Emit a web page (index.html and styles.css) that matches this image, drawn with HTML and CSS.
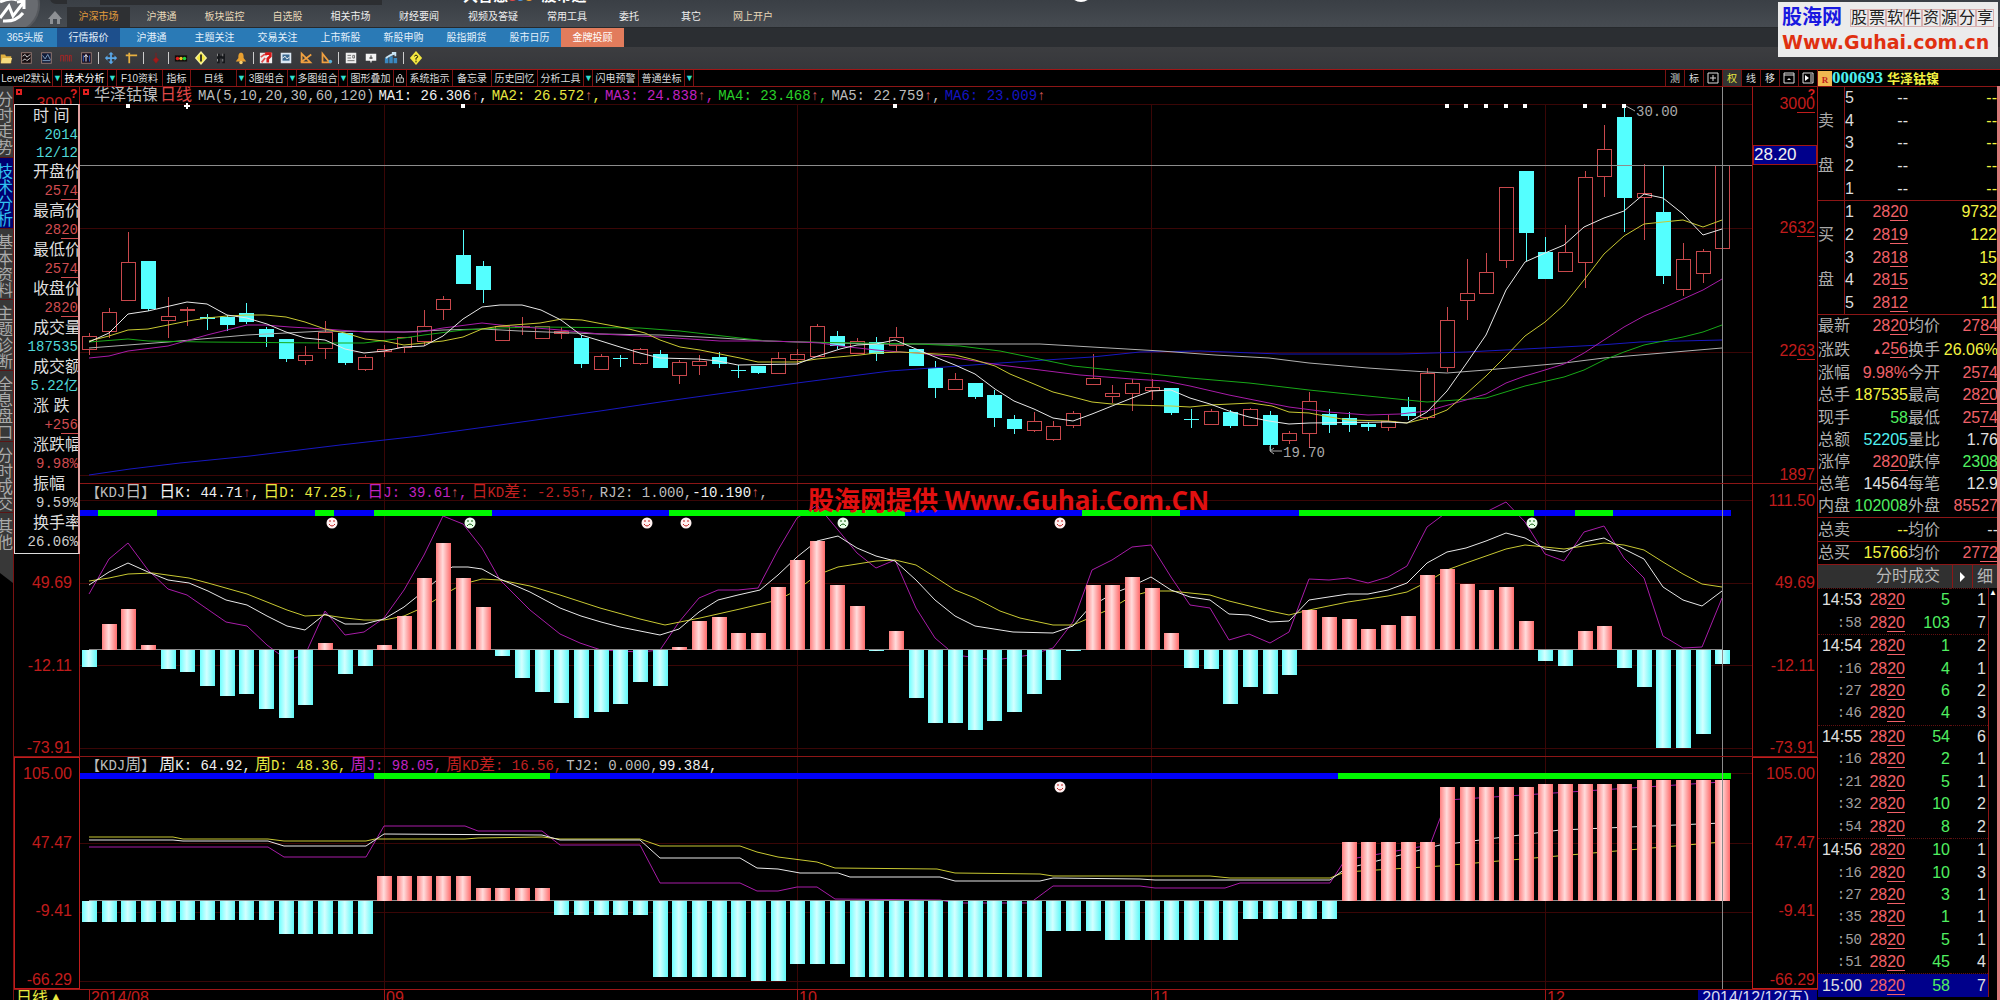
FILE: index.html
```html
<!DOCTYPE html>
<html lang="zh-CN">
<head>
  <meta charset="UTF-8" />
  <meta name="viewport" content="width=device-width, initial-scale=1.0"/>
  <title>华泽钴镍 000693 - 技术分析</title>
  <link rel="stylesheet" href="styles.css">
</head>
<body>
  <!-- Top navigation -->
  <header class="top">
    <svg class="logo" viewBox="0 0 67 28" aria-hidden="true">
      <circle cx="12" cy="6" r="28" fill="#55585d"/>
      <circle cx="12" cy="6" r="26" fill="#686b70"/>
      <path d="M0 19 L9 7 L13 17 L23 4 M17 3 L24 2 L24 10" fill="none" stroke="#fff" stroke-width="3"/>
      <path d="M0 3 Q10 -2 17 1 M3 22 Q16 23 23 14" fill="none" stroke="#fff" stroke-width="3"/>
      <path d="M48 20 L55 12 L62 20 L60 20 L60 25 L57 25 L57 20 L53 20 L53 25 L50 25 L50 20 Z" fill="#8d9094"/>
      <path d="M50 0 Q51 5 57 5 L67 5 L67 0 Z" fill="#2c2e31"/>
    </svg>
    <nav class="main-nav">
      <a href="#" class="active">沪深市场</a>
      <a href="#">沪港通</a>
      <a href="#">板块监控</a>
      <a href="#">自选股</a>
      <a href="#" class="plain">相关市场</a>
      <a href="#" class="wide plain">财经要闻</a>
      <a href="#" class="wide plain">视频及答疑</a>
      <a href="#" class="wide plain">常用工具</a>
      <a href="#" class="narrow plain">委托</a>
      <a href="#" class="wide plain">其它</a>
      <a href="#" class="narrow">网上开户</a>
    </nav>
    <div class="top-strip"></div>
    <div class="brand">大智慧<span class="r">3</span><span class="b">6</span><span class="o">5</span>&nbsp; 股市通</div>
    <div class="knob"></div>
  </header>

  <nav class="sub-nav">
    <a href="#" class="first">365头版</a>
    <a href="#" class="active">行情报价</a>
    <a href="#">沪港通</a>
    <a href="#">主题关注</a>
    <a href="#">交易关注</a>
    <a href="#">上市新股</a>
    <a href="#">新股申购</a>
    <a href="#">股指期货</a>
    <a href="#">股市日历</a>
    <a href="#" class="gold">金牌投顾</a>
  </nav>

  <!-- Icon toolbar -->
  <div class="icons">
    <button aria-label="打开"><svg viewBox="0 0 16 16"><path d="M2 4h5l1 2h6v8H2z" fill="#e0b040"/><path d="M4 8h11l-2 6H2z" fill="#f6dc80"/></svg></button>
    <button aria-label="分时"><svg viewBox="0 0 16 16"><rect x="3" y="2" width="11" height="12" fill="#150d10" stroke="#a08078"/><path d="M4 6l3-2 2 3 4-3M4 11l3-2 2 2 4-3" stroke="#ddd" fill="none"/></svg></button>
    <button aria-label="日线"><svg viewBox="0 0 16 16"><rect x="3" y="2" width="11" height="12" fill="#121c38" stroke="#a08078"/><path d="M4 5l3 4 3-5 3 6M4 11h9" stroke="#8ac" fill="none"/></svg></button>
    <button aria-label="成交"><svg viewBox="0 0 16 16"><path d="M2 12V5h3v7M7 12V5h3v7M12 12V5h2v7" stroke="#b02424" fill="none"/></svg></button>
    <button aria-label="指标"><svg viewBox="0 0 16 16"><rect x="3" y="2" width="11" height="12" fill="#181024" stroke="#a08078"/><path d="M8 12V5M6 7l2-3 2 3" stroke="#fff" fill="none"/><path d="M5 5v7M12 5v7" stroke="#36c"/></svg></button>
    <i></i>
    <button aria-label="移动"><svg viewBox="0 0 16 16"><path d="M8 1l3 3H9v3h3V5l3 3-3 3V9H9v3h2l-3 3-3-3h2V9H4v2L1 8l3-3v2h3V4H5z" fill="#5aa8e8"/></svg></button>
    <button aria-label="画线"><svg viewBox="0 0 16 16"><path d="M2 5h13M6 2v12" stroke="#e8b040" stroke-width="2"/></svg></button>
    <i></i>
    <button aria-label="标记"><svg viewBox="0 0 16 16"><path d="M8 2v5M8 7l-3 3 3 4 3-4z" stroke="#8c1a1a" fill="#a01c1c"/></svg></button>
    <i></i>
    <button aria-label="信号灯"><svg viewBox="0 0 16 16"><rect x="1" y="5" width="14" height="7" fill="#120c08"/><circle cx="4" cy="8.5" r="2" fill="#e02020"/><circle cx="8" cy="8.5" r="2" fill="#f0c020"/><circle cx="12" cy="8.5" r="2" fill="#20d040"/></svg></button>
    <button aria-label="提示"><svg viewBox="0 0 16 16"><path d="M8 0l7 8-7 8-7-8z" fill="#f6f0a0"/><path d="M8 2l5 6-5 6-5-6z" fill="#f4e840"/><path d="M8 4v8" stroke="#222" stroke-width="2"/></svg></button>
    <button aria-label="查找"><svg viewBox="0 0 16 16"><path d="M5 3v11M11 3v11M5 7h6" stroke="#15171a" stroke-width="3"/><path d="M4 3v3M10 3v3M4 9v3M10 9v3" stroke="#999"/></svg></button>
    <button aria-label="预警"><svg viewBox="0 0 16 16"><path d="M8 2c3 0 3 3 3 6l3 4H2l3-4c0-3 0-6 3-6z" fill="#e8a030"/><circle cx="8" cy="13" r="2" fill="#f8d070"/></svg></button>
    <i></i>
    <button aria-label="地雷"><svg viewBox="0 0 16 16"><rect x="1" y="2" width="14" height="12" fill="#eee"/><path d="M2 7l4-3h3M3 13l4-5" stroke="#e05050" stroke-width="2" fill="none"/><path d="M7 3h6v3l-3 3v4" stroke="#d81818" stroke-width="3" fill="none"/></svg></button>
    <button aria-label="窗口"><svg viewBox="0 0 16 16"><rect x="2" y="2" width="12" height="12" fill="#dce8f4"/><rect x="4" y="4" width="8" height="7" fill="#3a6890"/><path d="M4 8l3-2 2 3 3-2" stroke="#fff" fill="none"/></svg></button>
    <button aria-label="画图"><svg viewBox="0 0 16 16"><path d="M3 3v10h10zM2 13L14 4" stroke="#f0a040" stroke-width="2" fill="none"/></svg></button>
    <button aria-label="三角尺"><svg viewBox="0 0 16 16"><path d="M4 3v10h8z" stroke="#f0a040" stroke-width="2" fill="none"/><circle cx="13" cy="12" r="2" fill="#5ab0d8"/></svg></button>
    <i></i>
    <button aria-label="资讯"><svg viewBox="0 0 16 16"><rect x="2" y="2" width="12" height="12" fill="#eee"/><path d="M4 5h4M4 8h4M4 11h8M10 5h2v3h-2z" stroke="#666" fill="none"/></svg></button>
    <button aria-label="消息"><svg viewBox="0 0 16 16"><path d="M2 3h12v8H9l-1 3-1-3H2z" fill="#f4f4f4"/><path d="M8 5v4M6 8h4" stroke="#222"/></svg></button>
    <button aria-label="统计"><svg viewBox="0 0 16 16"><path d="M1 8h4v6H1zM6 6h4v8H6zM11 8h4v6h-4z" fill="#3a88c0"/><path d="M2 8l5-3 5-2M9 2h4v4" stroke="#c8e4f4" stroke-width="2" fill="none"/></svg></button>
    <i></i>
    <button aria-label="帮助"><svg viewBox="0 0 16 16"><path d="M8 0l7 8-7 8-7-8z" fill="#f4e840"/><path d="M6 6q2-3 4 0q0 2-2 2v2M8 11v2" stroke="#000" fill="none"/></svg></button>
  </div>

  <!-- Chart toolbar -->
  <div class="tools">
    <button class="level">Level2默认</button><button class="arrow" aria-label="选择模板">▼</button>
    <button class="on">技术分析</button><button class="arrow" aria-label="选择分析">▼</button>
    <button>F10资料</button>
    <button class="short">指标</button>
    <button>日线</button><button class="arrow" aria-label="选择周期">▼</button>
    <button class="mid">3图组合</button><button class="arrow" aria-label="选择组合">▼</button>
    <button class="mid">多图组合</button><button class="arrow" aria-label="选择多图">▼</button>
    <button>图形叠加</button>
    <button class="lock" aria-label="锁定"><svg viewBox="0 0 12 14"><path d="M4 7V4q2-3 4 0v3" fill="none" stroke="#ddd"/><path d="M2 7h8v5H2zM6 8v3" fill="none" stroke="#ddd"/></svg></button>
    <button>系统指示</button>
    <button class="note">备忘录</button>
    <button>历史回忆</button>
    <button>分析工具</button><button class="arrow" aria-label="选择工具">▼</button>
    <button>闪电预警</button>
    <button>普通坐标</button><button class="arrow" aria-label="选择坐标">▼</button>
    <div class="tools-right">
      <button>测</button><button>标</button>
      <button aria-label="分屏"><svg viewBox="0 0 12 12"><path d="M1 1h10v10H1zM3 6h6M6 3v6" fill="none" stroke="#ddd"/></svg></button>
      <button class="sel">权</button><button>线</button><button>移</button>
      <button aria-label="最大化"><svg viewBox="0 0 12 12"><path d="M1 1h10v10H1zM1 3h10" fill="none" stroke="#ddd"/><path d="M4 8l2-2 2 2z" fill="#ddd"/></svg></button>
      <button aria-label="展开"><svg viewBox="0 0 12 12"><path d="M1 1h10v10H1zM9 2v8" fill="none" stroke="#ddd"/><path d="M3 3l4 3-4 3z" fill="#fff"/></svg></button>
    </div>
    <div class="stock"><span class="badge">R</span><span class="code">000693</span><span class="name">华泽钴镍</span></div>
  </div>

  <main>
    <nav class="side">
      <a href="#"><span>分时走势</span></a>
      <a href="#" class="on"><span>技术分析</span></a>
      <a href="#"><span>基本资料</span></a>
      <a href="#"><span>主题诊断</span></a>
      <a href="#"><span>全息盘口</span></a>
      <a href="#"><span>分时成交</span></a>
      <a href="#" class="last"><span>其他</span></a>
    </nav>

    <div class="charts">
      <!-- K line -->
      <section class="pane">
        <div class="axis left"><span>3000</span></div>
        <div class="plot">
          <svg id="kline" viewBox="80 87 1672 396" preserveAspectRatio="none"></svg>
          <div class="legend first">
            <span class="cn grey">华泽钴镍<em>日线</em></span>
            <span class="grey">MA(5,10,20,30,60,120)</span>
            <span class="white">MA1: 26.306<u>↑</u>,</span>
            <span class="yellow">MA2: 26.572<u>↑</u>,</span>
            <span class="magenta">MA3: 24.838<u>↑</u>,</span>
            <span class="green">MA4: 23.468<u>↑</u>,</span>
            <span class="grey">MA5: 22.759<u>↑</u>,</span>
            <span class="blue">MA6: 23.009<u>↑</u></span>
          </div>
        </div>
        <div class="axis right">
          <span>30<s>00</s></span><span>26<s>32</s></span><span>22<s>63</s></span><span>18<s>97</s></span>
          <b class="q">?</b>
          <div class="price-tag">28.20</div>
        </div>
        <i class="sq one"></i><i class="sq two"></i><b class="q left-q">?</b>
      </section>

      <!-- KDJ day -->
      <section class="pane">
        <div class="axis left"><span>&nbsp;</span><span>49.69</span><span>-12.11</span><span>-73.91</span></div>
        <div class="plot">
          <svg id="kdjDay" viewBox="80 484 1672 272" preserveAspectRatio="none"></svg>
          <div class="legend">
            <span class="grey">【KDJ<span class="cn">日</span>】</span>
            <span class="white"><span class="cn">日</span>K: 44.71<u>↑</u>,</span>
            <span class="yellow"><span class="cn">日</span>D: 47.25<u class="down">↓</u>,</span>
            <span class="magenta"><span class="cn">日</span>J: 39.61<u>↑</u>,</span>
            <span class="red"><span class="cn">日</span>KD<span class="cn">差</span>: -2.55<u>↑</u>,</span>
            <span class="grey">RJ2: 1.000,<span class="white">-10.190</span><u>↑</u>,</span>
          </div>
        </div>
        <div class="axis right"><span>111.50</span><span>49.69</span><span>-12.11</span><span>-73.91</span></div>
        <div class="watermark">股海网提供 Www.Guhai.Com.CN</div>
      </section>

      <!-- KDJ week -->
      <section class="pane bright">
        <div class="axis left"><span>105.00</span><span>47.47</span><span>-9.41</span><span>-66.29</span></div>
        <div class="plot">
          <svg id="kdjWeek" viewBox="80 757 1672 232" preserveAspectRatio="none"></svg>
          <div class="legend">
            <span class="grey">【KDJ<span class="cn">周</span>】</span>
            <span class="white"><span class="cn">周</span>K: 64.92,</span>
            <span class="yellow"><span class="cn">周</span>D: 48.36,</span>
            <span class="magenta"><span class="cn">周</span>J: 98.05,</span>
            <span class="red"><span class="cn">周</span>KD<span class="cn">差</span>: 16.56,</span>
            <span class="grey">TJ2: 0.000,<span class="white">99.384,</span></span>
          </div>
        </div>
        <div class="axis right"><span>105.00</span><span>47.47</span><span>-9.41</span><span>-66.29</span></div>
      </section>

      <div class="dates">
        <span class="period">日线▲</span>
        <span class="m aug">2014/08</span>
        <span class="m sep">09</span>
        <span class="m oct">10</span>
        <span class="m nov">11</span>
        <span class="m dec">12</span>
        <span class="cur">2014/12/12(五)</span>
      </div>

      <!-- Values under the cursor -->
      <dl class="info">
        <dt>时 间</dt><dd class="c tight">2014</dd><dd class="c tight">12/12</dd>
        <dt>开盘价</dt><dd>25<s>74</s></dd>
        <dt>最高价</dt><dd>28<s>20</s></dd>
        <dt>最低价</dt><dd>25<s>74</s></dd>
        <dt>收盘价</dt><dd>28<s>20</s></dd>
        <dt>成交量</dt><dd class="c">187535</dd>
        <dt>成交额</dt><dd class="c">5.22亿</dd>
        <dt>涨 跌</dt><dd>+2<s>56</s></dd>
        <dt>涨跌幅</dt><dd>9.98%</dd>
        <dt>振幅</dt><dd class="w">9.59%</dd>
        <dt>换手率</dt><dd class="w">26.06%</dd>
      </dl>
    </div>

    <aside class="quote">
      <div class="book">
        <table>
          <tr><td class="side-name"></td><td class="n">5</td><td class="p w">--</td><td class="y">--</td></tr>
          <tr><td class="side-name">卖</td><td class="n">4</td><td class="p w">--</td><td class="y">--</td></tr>
          <tr><td class="side-name"></td><td class="n">3</td><td class="p w">--</td><td class="y">--</td></tr>
          <tr><td class="side-name">盘</td><td class="n">2</td><td class="p w">--</td><td class="y">--</td></tr>
          <tr><td class="side-name"></td><td class="n">1</td><td class="p w">--</td><td class="y">--</td></tr>
          <tr class="line"><td class="side-name"></td><td class="n">1</td><td class="p">28<s>20</s></td><td class="y">9732</td></tr>
          <tr><td class="side-name">买</td><td class="n">2</td><td class="p">28<s>19</s></td><td class="y">122</td></tr>
          <tr><td class="side-name"></td><td class="n">3</td><td class="p">28<s>18</s></td><td class="y">15</td></tr>
          <tr><td class="side-name">盘</td><td class="n">4</td><td class="p">28<s>15</s></td><td class="y">32</td></tr>
          <tr><td class="side-name"></td><td class="n">5</td><td class="p">28<s>12</s></td><td class="y">11</td></tr>
        </table>
      </div>
      <div class="stats">
        <table>
          <tr class="line"><th>最新</th><td class="p">28<s>20</s></td><th>均价</th><td class="p">27<s>84</s></td></tr>
          <tr><th>涨跌</th><td class="p"><small>▲</small>2<s>56</s></td><th>换手</th><td class="y">26.06%</td></tr>
          <tr><th>涨幅</th><td class="p">9.98%</td><th>今开</th><td class="p">25<s>74</s></td></tr>
          <tr><th>总手</th><td class="y">187535</td><th>最高</th><td class="p">28<s>20</s></td></tr>
          <tr><th>现手</th><td class="g">58</td><th>最低</th><td class="p">25<s>74</s></td></tr>
          <tr><th>总额</th><td class="c">52205</td><th>量比</th><td class="w">1.76</td></tr>
          <tr><th>涨停</th><td class="p">28<s>20</s></td><th>跌停</th><td class="g">23<s>08</s></td></tr>
          <tr><th>总笔</th><td class="w">14564</td><th>每笔</th><td class="w">12.9</td></tr>
          <tr><th>内盘</th><td class="g">102008</td><th>外盘</th><td class="p">85527</td></tr>
          <tr class="line"><th>总卖</th><td class="y">--</td><th>均价</th><td class="w">--</td></tr>
          <tr class="line"><th>总买</th><td class="y">15766</td><th>均价</th><td class="p">27<s>72</s></td></tr>
        </table>
      </div>
      <div class="ticks-head"><span>分时成交</span><button class="play" aria-label="切换"></button><button>细</button></div>
      <div class="ticks">
        <table id="ticks"></table>
        <div class="scroll">▲</div>
      </div>
    </aside>
    <div class="edge"></div>
  </main>

  <div class="site">
    <div class="site-row"><b>股海网</b><span><i>股</i><i>票</i><i>软</i><i>件</i><i>资</i><i>源</i><i>分</i><i>享</i></span></div>
    <div class="site-url">Www.Guhai.com.cn</div>
  </div>

  <script src="chart.js"></script>
</body>
</html>
```

FILE: styles.css
```css
* {
  box-sizing: border-box;
}
body {
  margin: 0;
  height: 100vh;
  overflow: hidden;
  display: flex;
  flex-direction: column;
  background: #000;
  color: #ddd;
  font-family: "Liberation Sans", "Noto Sans CJK SC", sans-serif;
  font-size: 16px;
}
a {
  color: inherit;
  text-decoration: none;
}
button {
  margin: 0;
  padding: 0;
  border: 0;
  background: none;
  color: inherit;
  font: inherit;
  white-space: nowrap;
}
table {
  border-collapse: collapse;
}
s {
  text-decoration: none;
  border-bottom: 1px solid;
}

/* top navigation */
.top {
  position: relative;
  flex: none;
  height: 28px;
  display: flex;
  align-items: flex-end;
  overflow: hidden;
  background: linear-gradient(#3a3f45, #464b51);
  border-bottom: 1px solid #26292c;
}
.logo {
  width: 67px;
  height: 28px;
}
.main-nav {
  display: flex;
  font-size: 10px;
  line-height: 20px;
  text-align: center;
}
.main-nav a {
  width: 63px;
  color: #e8d8b8;
}
.main-nav .plain {
  color: #eee;
}
.main-nav .wide {
  width: 74px;
}
.main-nav .narrow {
  width: 50px;
}
.main-nav .active {
  background: #2e3033;
  color: #e09a3c;
}
.top-strip {
  position: absolute;
  left: 100px;
  top: 0;
  width: 282px;
  height: 5px;
  background: #2c2e31;
}
.brand {
  position: absolute;
  left: 463px;
  top: -14px;
  font-size: 15px;
  font-weight: bold;
  line-height: 20px;
  color: #fff;
}
.brand .r { color: #e04848; }
.brand .b { color: #4a90d8; }
.brand .o { color: #e8a030; }
.knob {
  position: absolute;
  left: 1069px;
  top: -22px;
  width: 24px;
  height: 24px;
  border-radius: 50%;
  background: #fff;
}

.sub-nav {
  flex: none;
  display: flex;
  height: 19px;
  background: #2b2e32;
  color: #e4f0fa;
  font-size: 10px;
  line-height: 19px;
  text-align: center;
}
.sub-nav a {
  width: 63px;
  background: #2a7ab6;
}
.sub-nav .first {
  width: 57px;
  padding-right: 7px;
}
.sub-nav .active {
  background: #1d4f8c;
}
.sub-nav .gold {
  background: #e27c5c;
  color: #fff;
}

/* toolbars */
.icons {
  flex: none;
  display: flex;
  align-items: center;
  height: 22px;
  margin-left: -4px;
  background: linear-gradient(#3c3d40, #36373b);
}
.icons button {
  width: 20px;
  height: 16px;
}
.icons svg {
  display: block;
  width: 14px;
  height: 14px;
  margin: 1px auto;
}
.icons i {
  width: 1px;
  height: 12px;
  margin: 0 2px;
  background: #ccc;
}
.tools {
  flex: none;
  display: flex;
  height: 17px;
  border-top: 1px solid #a01616;
  font-size: 10px;
  line-height: 15px;
}
.tools button {
  width: 46px;
  border-right: 1px solid #7a1212;
}
.tools .level { width: 53px; }
.tools .short { width: 28px; }
.tools .mid { width: 42px; }
.tools .note { width: 39px; }
.tools .on { color: #fff; }
.tools .arrow {
  width: 9px;
  font-size: 9px;
  color: #2fe0d0;
}
.tools .lock {
  width: 13px;
}
.tools svg {
  display: block;
  width: 12px;
  height: 12px;
  margin: auto;
}
.tools-right {
  display: flex;
  margin-left: auto;
  border-left: 1px solid #7a1212;
}
.tools-right button {
  width: 19px;
}
.tools-right .sel {
  background: #333;
  color: #e8e840;
}
.stock {
  width: 182px;
  display: flex;
  align-items: center;
  font-weight: bold;
  white-space: nowrap;
}
.stock .badge {
  width: 14px;
  height: 15px;
  background: #f0b850;
  color: #c02020;
  font: bold 9px/18px "Liberation Serif", serif;
  text-align: center;
}
.stock .code {
  font: bold 17px/16px "Liberation Serif", serif;
  color: #4ef0f0;
}
.stock .name {
  margin-left: 4px;
  font-size: 13px;
  color: #f0f040;
}

/* body of the window */
main {
  flex: 1;
  min-height: 0;
  display: grid;
  grid-template-columns: 14px minmax(0, 1fr) 179px 3px;
  grid-template-rows: minmax(0, 1fr);
}
.side {
  overflow: hidden;
  color: #aaa;
  line-height: 16px;
  border-right: 1px solid #7a1212;
}
.side a {
  display: flex;
  justify-content: flex-end;
  height: 71px;
  padding: 6px 0 0;
  background: #383838;
}
.side a + a {
  border-top: 1px solid #5a1414;
}
.side .last {
  clip-path: polygon(0 0, 100% 0, 100% 100%, 0 calc(100% - 10px));
}
.side span {
  flex: none;
  width: 16px;
  word-break: break-all;
}
.side .on {
  background: #000070;
  color: #30c0f0;
}
.charts {
  position: relative;
  display: grid;
  grid-template-rows: minmax(0, 397fr) minmax(0, 273fr) minmax(0, 233fr) 11px;
}
.pane {
  position: relative;
  display: grid;
  grid-template-columns: 66px minmax(0, 1fr) 66px;
  grid-template-rows: minmax(0, 1fr);
  border-top: 1px solid #8c1616;
}
.axis {
  position: relative;
  display: flex;
  flex-direction: column;
  justify-content: space-between;
  padding-top: 9px;
  color: #c01c1c;
  line-height: 16px;
  text-align: right;
}
.axis.left {
  padding-right: 7px;
  border-right: 1px solid #a01616;
}
.axis.right {
  padding-right: 2px;
  border-left: 1px solid #a01616;
  border-right: 1px solid #a01616;
}
.bright .axis {
  border: 1px solid #c01c1c;
  padding-top: 8px;
}
.plot {
  display: grid;
  grid-template-rows: minmax(0, 1fr);
}
.plot > * {
  grid-area: 1 / 1;
}
.plot svg {
  display: block;
  width: 100%;
  height: 100%;
}
.legend {
  align-self: start;
  display: flex;
  gap: 4px;
  padding-left: 6px;
  font-family: "Liberation Mono", "Noto Sans CJK SC", monospace;
  font-size: 14px;
  line-height: 18px;
  white-space: nowrap;
  z-index: 1;
}
.legend.first {
  padding-left: 14px;
}
.legend .cn {
  font-size: 16px;
}
.legend em {
  margin: 0 2px;
  font-style: normal;
  color: #e04848;
}
.legend u {
  text-decoration: none;
  color: #d05858;
}
.legend .down {
  color: #30c030;
}
.white { color: #f0f0f0; }
.grey { color: #bdbdbd; }
.yellow { color: #e8e840; }
.magenta { color: #c022c0; }
.green { color: #28d028; }
.blue { color: #1414c0; }
.red { color: #c02020; }
.price-tag {
  position: absolute;
  left: 0;
  right: 0;
  top: 58px;
  border: 1px solid #a01616;
  background: #00008b;
  color: #f0f0f0;
  font-size: 17px;
  line-height: 18px;
  text-align: left;
}
.q {
  position: absolute;
  right: 2px;
  top: 0;
  font-size: 12px;
  line-height: 14px;
  color: #e02020;
}
.left-q {
  right: auto;
  left: 56px;
}
.sq {
  position: absolute;
  top: 2px;
  width: 6px;
  height: 6px;
  border: 2px solid #e02020;
}
.sq.one { left: 2px; }
.sq.two { left: 69px; }
.watermark {
  position: absolute;
  left: 794px;
  top: 1px;
  color: #e01010;
  font-family: "Open Sans", "Noto Sans CJK SC", sans-serif;
  font-size: 26px;
  font-weight: bold;
  line-height: 30px;
  white-space: nowrap;
  z-index: 2;
}

/* month labels */
.dates {
  position: relative;
  overflow: hidden;
  color: #c01c1c;
  line-height: 16px;
  border-top: 1px solid #a01616;
}
.dates span {
  position: absolute;
  top: 0;
  white-space: nowrap;
}
.dates .m {
  padding-left: 1px;
  border-left: 1px solid #a01616;
}
.dates .period {
  left: 2px;
  color: #e8e840;
}
.aug { left: 75px; }
.sep { left: 370px; }
.oct { left: 783px; }
.nov { left: 1137px; }
.dec { left: 1531px; }
.dates .cur {
  right: 1px;
  padding: 0 8px 0 4px;
  background: #00008b;
  color: #d8d8f0;
}

.info {
  position: absolute;
  left: 0;
  top: 18px;
  width: 66px;
  margin: 0;
  padding: 1px 0;
  overflow: hidden;
  background: #000;
  border: 1px solid #ddd;
  border-right: 2px solid #e0a0a0;
  z-index: 2;
}
.info dt {
  margin: 0 0 0 18px;
  color: #ddd;
  line-height: 20px;
  white-space: nowrap;
}
.info dd {
  margin: 0;
  color: #d04c50;
  font-family: "Liberation Mono", "Noto Sans CJK SC", monospace;
  font-size: 14px;
  line-height: 19px;
  text-align: right;
}
.info .tight { line-height: 18px; }
.info .c { color: #50d8d8; }
.info .w { color: #ccc; }

/* quote panel */
.quote {
  display: flex;
  flex-direction: column;
  padding-bottom: 3px;
  line-height: 18px;
}
.quote table {
  width: 100%;
  height: 100%;
  table-layout: fixed;
}
.quote td,
.quote th {
  padding: 0;
  font-weight: normal;
  text-align: right;
  white-space: nowrap;
}
.quote .line {
  border-top: 1px solid #8c1616;
}
.book {
  flex: 10 1 0;
  min-height: 0;
  border-top: 1px solid #8c1616;
}
.stats {
  flex: 11 1 0;
  min-height: 0;
}
.book .side-name {
  width: 26px;
  border-right: 1px solid #8c1616;
  color: #aaa;
  text-align: left;
}
.book .n {
  width: 10px;
}
.book .p {
  width: 54px;
}
.stats th {
  width: 34px;
  color: #b0b0b0;
  text-align: left;
}
.stats td {
  width: 56px;
}
.stats small {
  font-size: 9px;
}
.quote .p { color: #f06068; }
.quote .y { color: #f4f440; }
.quote .g { color: #50f060; }
.quote .c { color: #50f0f0; }
.quote .w { color: #e0e0e0; }
.ticks-head {
  flex: 1 1 0;
  min-height: 0;
  display: flex;
  border-top: 1px solid #8c1616;
  background: #303030;
  color: #b8b8b8;
  line-height: 21px;
}
.ticks-head span {
  flex: 1;
  padding-right: 12px;
  text-align: right;
}
.ticks-head button {
  width: 25px;
  border-left: 1px solid #8c1616;
  line-height: 20px;
}
.ticks-head .play {
  width: 20px;
}
.play::before {
  content: "";
  display: block;
  width: 0;
  margin: auto;
  border: 5px solid transparent;
  border-left-color: #fff;
  border-right: 0;
}
.ticks {
  flex: 18 1 0;
  min-height: 0;
  display: flex;
}
.ticks table {
  flex: 1;
}
.ticks td:nth-child(1) { width: 44px; color: #e0e0e0; }
.ticks td:nth-child(2) { width: 43px; }
.ticks td:nth-child(3) { width: 45px; }
.ticks td:nth-child(4) { padding-right: 2px; color: #e0e0e0; }
.ticks .sec td:first-child {
  color: #a0a0a0;
  font-family: "Liberation Mono", monospace;
  font-size: 14px;
}
.ticks .minute {
  border-top: 1px dotted #601010;
}
.ticks .now {
  background: #00008b;
}
.scroll {
  width: 9px;
  border-left: 1px solid #8c1616;
  color: #fff;
  font-size: 8px;
  line-height: 10px;
}
.edge {
  background: #d87878;
}

/* site card over the top right corner */
.site {
  position: absolute;
  right: 2px;
  top: 2px;
  width: 220px;
  padding: 3px 4px;
  background: #ebebeb;
  z-index: 3;
}
.site-row {
  display: flex;
  justify-content: space-between;
  align-items: center;
  line-height: 25px;
}
.site-row b {
  color: #1818e0;
  font-size: 20px;
}
.site-row span {
  display: flex;
}
.site-row i {
  width: 18px;
  height: 18px;
  border: 1px solid #d8b0b0;
  color: #222;
  font-size: 16px;
  font-style: normal;
  line-height: 16px;
  text-align: center;
}
.site-url {
  color: #e03010;
  font-family: "DejaVu Sans", sans-serif;
  font-size: 19px;
  font-weight: bold;
  line-height: 24px;
}

/* chart drawing */
.grid { stroke: #3a0606; }
.cross { stroke: #8c8c8c; }
.up { fill: none; stroke: #c8484c; }
.down-c { fill: #54ffff; stroke: #54ffff; }
.mark { fill: #a8a8a8; font: 14px "Liberation Mono", monospace; }
.crisp { shape-rendering: crispEdges; }
```

FILE: chart.js
```js
var STEP = 19.68;
var MONTHS = [384, 797, 1151, 1545];

// kind (r = rise, f = fall), body top, body bottom, high, low
var candles = [
  'r336,349,333,355', 'r312,331,308,338', 'r262,300,232,300', 'f261,309,261,311', 'r316,320,297,338', 'r309,310,307,326',
  'f317,319,314,330', 'f317,325,315,331', 'f313,322,303,324', 'f329,337,327,347', 'f339,359,339,362', 'r355,360,346,365',
  'r332,348,321,359', 'f333,363,333,365', 'r357,369,355,371', 'r349,351,345,357', 'r337,347,337,353', 'r326,341,310,346',
  'r299,309,296,320', 'f255,284,230,284', 'f266,290,261,303', 'r326,340,326,340', 'r326,327,317,335', 'r326,338,326,338',
  'r331,333,327,339', 'f338,364,335,368', 'r356,369,354,369', 'f358,359,355,367', 'r349,363,348,365', 'f354,368,350,368',
  'r362,375,360,384', 'r361,365,355,375', 'f357,364,352,368', 'f370,371,365,378', 'f366,373,366,374', 'r358,373,352,373',
  'r354,359,349,365', 'r326,356,324,356', 'f336,346,331,349', 'r341,353,338,353', 'f342,354,337,361', 'r337,345,327,352',
  'f349,366,349,366', 'f368,388,361,398', 'r379,389,373,389', 'f383,397,383,399', 'f395,418,390,427', 'f419,429,415,434',
  'r421,430,412,432', 'r426,439,421,441', 'r413,425,411,428', 'r378,384,354,384', 'r393,396,385,403', 'r383,393,379,411',
  'r387,390,379,400', 'f388,413,388,415', 'f419,420,409,428', 'r411,424,409,424', 'f412,426,410,428', 'r409,425,408,425',
  'f415,445,411,451', 'r433,440,431,444', 'r401,433,392,448', 'f414,425,409,433', 'f418,425,412,432', 'f424,427,422,431',
  'r421,427,415,431', 'f407,416,397,420', 'r373,417,368,420', 'r320,367,307,372', 'r293,300,259,320', 'r272,293,253,294',
  'r187,260,187,268', 'f171,233,171,261', 'f252,279,237,279', 'r252,271,225,271', 'r177,262,171,288', 'r149,176,125,197',
  'f117,198,104,232', 'r193,197,164,240', 'f212,276,165,284', 'r259,289,243,296', 'r251,273,249,283', 'r165,248,165,248'
];

var ma = {
  '#1818c0': '89,475 130,469 180,463 250,456 340,445 420,436 500,425 600,411 667,401 797,383 890,371 1000,363 1092,357 1140,352 1200,351 1280,354 1400,354 1466,352 1525,349 1600,345 1640,342 1722,340',
  '#b0b0b0': '89,348 128,345 168,342 247,335 325,331 404,332 443,330 482,329 520,331 600,334 660,335 720,338 767,341 800,342 876,344 1040,344 1092,347 1161,351 1215,355 1269,358 1309,363 1368,368 1427,372 1447,373 1486,370 1564,363 1604,358 1663,353 1722,348',
  '#18a818': '89,342 128,339 148,341 205,342 325,343 364,343 404,338 424,335 463,330 500,328 540,327 640,328 680,331 740,338 767,341 800,342 860,343 918,344 960,346 1000,351 1034,358 1073,366 1132,372 1190,378 1249,383 1309,390 1348,394 1407,400 1427,402 1486,398 1525,386 1564,377 1584,370 1604,360 1624,352 1644,345 1683,337 1703,332 1722,325',
  '#a81ca8': '89,358 109,356 128,351 168,346 207,335 247,325 265,325 290,327 325,329 365,332 420,332 443,328 482,323 500,325 560,330 600,334 660,337 720,341 767,341 800,342 820,343 840,346 876,350 900,352 918,353 950,357 975,361 1000,365 1040,370 1080,375 1132,379 1165,381 1190,386 1229,395 1269,403 1289,407 1328,412 1368,415 1400,414 1427,411 1466,400 1486,394 1506,383 1525,376 1545,370 1564,364 1584,353 1604,340 1624,327 1644,316 1663,308 1683,299 1703,290 1722,279',
  '#c8c832': '89,341 109,336 128,330 148,329 168,325 188,321 207,318 227,316 247,315 265,315 286,317 305,322 325,329 345,333 365,339 384,341 404,345 424,343 443,341 463,337 482,329 500,326 540,323 562,319 582,320 603,324 625,328 645,333 660,340 680,347 700,350 720,354 740,358 758,362 797,362 817,359 838,357 860,355 876,353 900,352 918,353 955,355 975,360 995,366 1010,374 1034,384 1053,392 1073,397 1092,402 1112,404 1132,405 1171,406 1190,407 1210,405 1251,403 1272,406 1289,412 1309,413 1330,417 1348,420 1388,421 1407,423 1427,418 1447,410 1466,394 1486,376 1506,356 1525,336 1545,322 1564,305 1584,280 1604,254 1624,236 1644,224 1663,222 1683,220 1703,227 1722,220',
  '#e8e8e8': '89,342 109,333 128,314 148,311 187,302 207,304 227,315 247,318 267,324 286,332 305,338 325,340 345,349 364,353 384,351 404,347 424,346 443,336 463,319 482,307 500,305 522,305 541,310 561,320 581,335 601,341 620,347 640,353 660,358 699,359 718,361 738,365 797,364 818,356 840,349 857,345 876,344 895,340 916,349 935,357 955,365 975,374 995,389 1014,401 1034,409 1053,418 1073,421 1092,414 1112,406 1132,398 1151,391 1171,390 1190,398 1210,404 1229,411 1249,417 1269,421 1289,424 1309,423 1388,422 1407,423 1427,412 1447,391 1466,364 1486,335 1506,290 1525,262 1545,253 1564,245 1584,227 1604,218 1624,211 1644,194 1663,198 1683,214 1703,235 1722,229'
};

var day = {
  zero: 650,
  grid: [500, 583, 665, 748],
  bars: [667, 624, 609, 645, 669, 672, 686, 696, 694, 709, 718, 705, 643, 674, 666, 645, 616, 578, 543, 578, 607, 656,
    678, 692, 703, 718, 712, 704, 682, 686, 647, 621, 617, 633, 633, 587, 560, 541, 585, 606, 650, 631, 698, 723, 723,
    730, 721, 712, 694, 680, 651, 585, 585, 577, 588, 633, 668, 669, 704, 687, 694, 675, 610, 617, 619, 629, 625, 616,
    575, 569, 584, 590, 587, 621, 661, 666, 631, 626, 668, 687, 748, 748, 734, 664],
  band: 510,
  green: [[98, 157], [315, 334], [374, 492], [669, 905], [1082, 1180], [1299, 1534], [1575, 1613]],
  faces: [[332, 523, 1], [470, 523, 0], [647, 523, 1], [686, 523, 1], [843, 523, 0], [1060, 523, 1], [1532, 523, 0]],
  lines: {
    '#a81ca8': '89,594 109,559 128,543 148,570 168,589 187,595 226,622 247,626 267,645 287,660 305,655 325,611 345,635 364,632 384,618 404,590 424,555 443,516 463,524 482,548 500,580 530,610 560,634 580,643 601,650 640,652 660,650 679,622 699,598 718,590 738,590 758,588 778,550 797,518 817,505 838,530 857,553 876,568 895,560 916,608 935,638 955,655 995,660 1030,655 1053,648 1073,622 1092,570 1112,560 1132,547 1151,545 1171,577 1190,605 1210,608 1229,640 1249,634 1270,643 1289,632 1309,579 1329,580 1348,578 1368,583 1388,577 1407,566 1427,527 1447,512 1466,512 1486,512 1506,502 1525,522 1545,554 1564,561 1584,532 1604,526 1624,558 1644,578 1663,636 1683,648 1702,647 1722,598',
    '#c8c832': '89,581 109,578 128,574 153,573 189,578 208,583 247,594 287,610 305,616 325,615 345,618 364,620 384,620 404,616 424,607 443,595 463,584 482,579 500,580 530,586 560,595 600,608 640,619 665,625 700,618 740,609 778,600 797,590 817,575 838,567 876,561 895,560 916,565 935,577 955,590 975,598 1000,611 1020,618 1053,625 1073,625 1092,617 1112,608 1132,596 1151,591 1171,591 1190,593 1210,595 1229,601 1270,611 1289,615 1309,610 1348,602 1388,596 1407,592 1427,582 1447,570 1466,563 1506,549 1525,545 1545,547 1564,549 1584,546 1604,543 1624,545 1644,550 1663,562 1683,574 1702,584 1722,587',
    '#e8e8e8': '89,585 109,572 128,563 148,572 168,580 189,583 208,591 226,600 247,605 267,616 287,626 305,630 325,614 345,624 364,624 384,619 404,607 424,591 443,575 452,567 468,567 482,569 500,579 530,592 560,608 581,616 601,622 620,627 640,631 660,635 679,629 699,612 718,600 738,595 760,590 778,575 797,557 817,541 838,536 857,548 876,556 895,561 916,580 935,600 955,616 975,626 1013,632 1053,633 1073,626 1090,607 1112,594 1132,586 1151,577 1171,590 1190,597 1210,600 1229,614 1249,615 1270,622 1289,621 1309,600 1348,594 1368,594 1388,590 1407,583 1427,563 1447,552 1466,548 1486,541 1506,533 1525,538 1545,549 1564,552 1584,542 1604,538 1624,549 1644,559 1663,587 1683,600 1702,606 1722,591'
  }
};

var week = {
  zero: 901,
  grid: [773, 843, 912, 981],
  bars: [].concat(rep(922, 5), rep(920, 5), rep(934, 5), rep(876, 5), rep(888, 4), rep(915, 5), rep(977, 5), rep(981, 2),
    rep(964, 3), rep(977, 10), rep(931, 3), rep(940, 7), rep(919, 5), rep(842, 5), rep(787, 5), rep(784, 5), rep(780, 5)),
  band: 773,
  green: [[374, 550], [1338, 1731]],
  faces: [[1060, 787, 1]],
  lines: {
    '#a81ca8': '89,847 268,847 284,857 366,857 384,826 465,826 478,831 542,831 560,845 640,845 660,883 740,883 757,891 778,891 797,887 817,887 835,899 940,900 955,903 1030,903 1053,886 1140,886 1155,888 1225,888 1240,883 1330,883 1345,860 1430,845 1447,800 1722,782',
    '#c8c832': '89,837 173,837 183,839 268,839 284,841 366,841 375,839 465,839 478,838 542,837 560,839 640,839 660,846 740,846 757,852 778,857 817,862 835,868 937,869 955,873 1040,874 1053,876 1210,876 1230,878 1330,878 1345,872 1440,866 1722,842',
    '#e8e8e8': '89,840 173,840 183,841 268,841 284,846 366,846 384,834 542,835 560,840 640,840 660,858 740,858 757,868 778,869 800,873 838,873 850,877 940,877 955,881 1040,881 1053,878 1140,879 1155,880 1330,880 1345,869 1440,845 1560,830 1722,823'
  }
};

function rep(v, n) {
  return Array(n).fill(v);
}

function rect(x, y, w, h, attrs) {
  return '<rect x="' + x + '" y="' + y + '" width="' + w + '" height="' + h + '" ' + attrs + '/>';
}

function line(x1, y1, x2, y2, cls) {
  return '<path class="crisp ' + cls + '" d="M' + x1 + ' ' + y1 + 'L' + x2 + ' ' + y2 + '"/>';
}

function lines(set) {
  var out = '';
  for (var color in set) {
    out += '<polyline fill="none" stroke="' + color + '" points="' + set[color] + '"/>';
  }
  return out;
}

function grid(rows, top, bottom) {
  var out = '';
  rows.forEach(function (y) { out += line(80, y + 0.5, 1752, y + 0.5, 'grid'); });
  MONTHS.forEach(function (x) { out += line(x + 0.5, top, x + 0.5, bottom, 'grid'); });
  return out;
}

function face(f) {
  var x = f[0], y = f[1];
  var mouth = f[2] ? 'q3 4 6 0' : 'q3 -4 6 0';
  var color = f[2] ? '#c02020' : '#106010';
  return '<circle cx="' + x + '" cy="' + y + '" r="5.5" fill="' + (f[2] ? '#fff0f0' : '#e8ffe8') + '"/>' +
    '<path d="M' + (x - 3) + ' ' + (y + (f[2] ? 1 : 3)) + mouth + 'M' + (x - 2) + ' ' + (y - 3) + 'v2M' + (x + 2) + ' ' + (y - 3) + 'v2" fill="none" stroke="' + color + '"/>';
}

function drawKline() {
  var out = grid([104, 228, 352, 475], 104, 483);
  candles.forEach(function (c, i) {
    var v = c.slice(1).split(',').map(Number);
    var x = Math.round(89 + i * STEP);
    if (c[0] === 'r') {
      out += line(x + 0.5, v[2], x + 0.5, v[0], 'up') + line(x + 0.5, v[1], x + 0.5, v[3], 'up');
      out += rect(x - 6.5, v[0] + 0.5, 14, v[1] - v[0], 'class="up crisp"');
    } else {
      out += line(x + 0.5, v[2], x + 0.5, v[3], 'down-c');
      out += rect(x - 7, v[0], 15, v[1] - v[0], 'fill="#54ffff" class="crisp"');
    }
  });
  out += lines(ma);
  [128, 463, 895, 1447, 1466, 1486, 1506, 1525, 1585, 1604, 1624].forEach(function (x) {
    out += rect(x - 2, 104, 4, 4, 'fill="#fff"');
  });
  out += '<path d="M187 103v6M184 106h6" stroke="#fff" stroke-width="2"/>';
  out += '<path d="M1626 106l9 5M1270 446v5h12M1270 451l4 -3M1270 451l4 3" fill="none" stroke="#a8a8a8"/>';
  out += '<text class="mark" x="1636" y="116">30.00</text><text class="mark" x="1283" y="457">19.70</text>';
  out += line(80, 165.5, 1752, 165.5, 'cross') + line(1722.5, 86, 1722.5, 483, 'cross');
  document.getElementById('kline').innerHTML = out;
}

function drawKdj(id, d, top, bottom) {
  var out = '<defs>' +
    '<linearGradient id="' + id + 'R"><stop offset="0" stop-color="#ff8080"/><stop offset=".45" stop-color="#ffdcdc"/><stop offset="1" stop-color="#ff6c6c"/></linearGradient>' +
    '<linearGradient id="' + id + 'C"><stop offset="0" stop-color="#70ffff"/><stop offset=".45" stop-color="#d4ffff"/><stop offset="1" stop-color="#60f8f8"/></linearGradient></defs>';
  out += grid(d.grid, top, bottom) + lines(d.lines);
  out += line(89, d.zero - 0.5, 1722, d.zero - 0.5, 'cross');
  d.bars.forEach(function (y, i) {
    var x = Math.round(89 + i * STEP) - 7;
    if (y < d.zero) {
      out += rect(x, y, 15, d.zero - y, 'fill="url(#' + id + 'R)"');
    } else {
      out += rect(x, d.zero, 15, Math.max(1, y - d.zero), 'fill="url(#' + id + 'C)"');
    }
  });
  out += rect(80, d.band, 1651, 6, 'fill="#0000f8"');
  d.green.forEach(function (g) { out += rect(g[0], d.band, g[1] - g[0], 6, 'fill="#00f800"'); });
  d.faces.forEach(function (f) { out += face(f); });
  out += line(1722.5, top, 1722.5, bottom, 'cross');
  document.getElementById(id).innerHTML = out;
}

// time, volume, count
var trades = [
  ['14:53', 5, 1], [':58', 103, 7], ['14:54', 1, 2], [':16', 4, 1], [':27', 6, 2], [':46', 4, 3],
  ['14:55', 54, 6], [':16', 2, 1], [':21', 5, 1], [':32', 10, 2], [':54', 8, 2],
  ['14:56', 10, 1], [':16', 10, 3], [':27', 3, 1], [':35', 1, 1], [':50', 5, 1], [':51', 45, 4], ['15:00', 58, 7]
];

function drawTicks() {
  document.getElementById('ticks').innerHTML = trades.map(function (t, i) {
    var cls = t[0][0] === ':' ? 'sec' : 'minute';
    if (i === trades.length - 1) cls += ' now';
    return '<tr class="' + cls + '"><td>' + t[0] + '</td><td class="p">28<s>20</s></td><td class="g">' + t[1] + '</td><td>' + t[2] + '</td></tr>';
  }).join('');
}

drawKline();
drawKdj('kdjDay', day, 483, 756);
drawKdj('kdjWeek', week, 756, 989);
drawTicks();
```
